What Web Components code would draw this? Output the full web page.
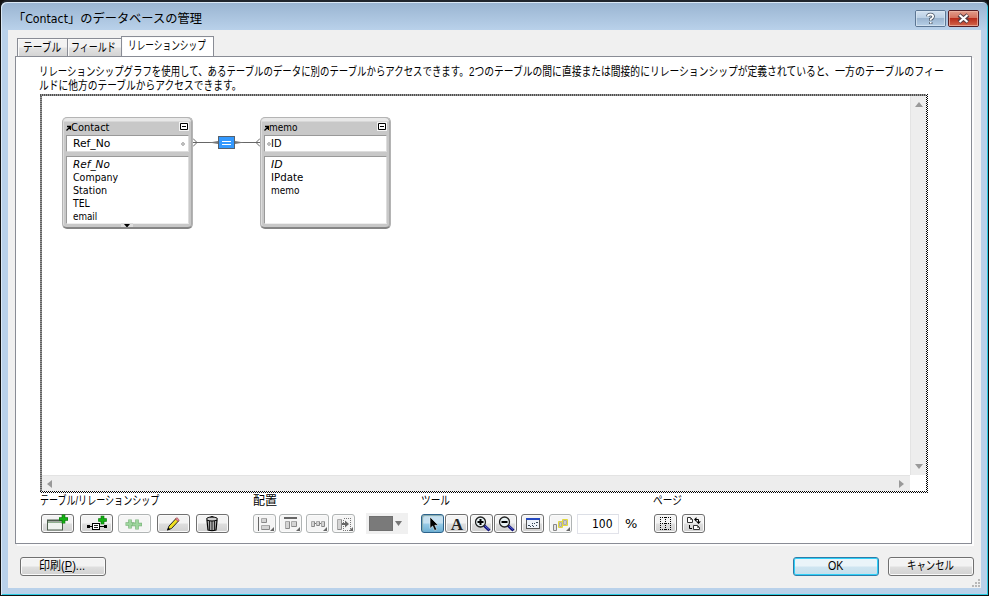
<!DOCTYPE html>
<html lang="ja">
<head>
<meta charset="utf-8">
<title>「Contact」のデータベースの管理</title>
<style>
  html,body{margin:0;height:100%;overflow:hidden;background:#111}
  body{font:12px/14px "Liberation Sans","Noto Sans CJK JP",sans-serif;color:#000}
</style>
</head>
<body>
<db-window></db-window>
<script>
const define = (name, html, setup) => customElements.define(name, class extends HTMLElement {
  constructor() {
    super();
    this.attachShadow({ mode: "open" }).innerHTML = `<style>:host,*,*::before,*::after{box-sizing:border-box}</style>${html}`;
  }
  connectedCallback() { if (setup) setup(this, this.shadowRoot); }
});

// text squeezed or stretched to a fixed advance width
define("fit-text", `
  <style>
    :host{display:block;white-space:nowrap;flex:none}
    span{display:inline-block;transform-origin:0 50%}
  </style><span><slot></slot></span>`, (el, root) => {
  const w = +el.getAttribute("w"), s = root.querySelector("span");
  el.style.width = w + "px";
  s.style.transform = `scaleX(${w / s.offsetWidth})`;
});

const plus = (x, y, r = 4.5, c = "#14b014") => `<path d="M${x - r} ${y}H${x + r}M${x} ${y - r}V${y + r}" stroke="#0a780a" stroke-width="3.6"/><path d="M${x - r + .6} ${y}H${x + r - .6}M${x} ${y - r + .6}V${y + r - .6}" stroke="${c}" stroke-width="2.2"/>`;
const box = (x, y, w, h, c = "#888") => `<path d="M${x + .5} ${y + h - .5}v${1 - h}h${w - 1}" fill="none" stroke="#aaa"/><rect x="${x + 1}" y="${y + 1}" width="${w - 2}" height="${h - 2}" fill="#d4d4d4"/><path d="M${x + .5} ${y + h - .5}h${w - 1}v${1 - h}" fill="none" stroke="${c}"/>`;
const more = `<path d="M21 13v4h-4z" fill="#666"/>`;
const lens = `<path d="M14 11.5l5.500 5" stroke="#101078" stroke-width="3"/><path d="M14.500 11.500l4.500 4" stroke="#5a6ae0" stroke-width="1"/><circle cx="10.500" cy="8" r="5" fill="#e8f2f4" stroke="#222" stroke-width="1.300"/>`;

const ICONS = {
  "new-table": `<rect x="6.500" y="6.500" width="15" height="9.500" fill="#eef4ee" stroke="#4c5c4c"/><path d="M6 6.500h16" stroke="#4c5c4c" stroke-width="2"/><path d="M7 8.500h14" stroke="#8fb08f"/>${plus(22.5, 5)}`,
  "new-rel": `<path d="M7 12.500h20" stroke="#000"/><path d="M7 11h3v3H7zM24 11h3v3h-3z"/><rect x="12.500" y="9.500" width="7" height="6" fill="#fff" stroke="#000"/><path d="M14 11.500h4M14 13.500h4" stroke="#222"/>${plus(22.5, 6, 4.3)}`,
  "dup": `<g opacity=".5">${plus(12, 10, 4.5, "#48b848")}${plus(19, 10.5, 5, "#48b848")}</g>`,
  "pencil": `<path d="M10.500 16l1.500-4 7-7.500 2.500 2.500-7 7.500z" fill="#f0e020" stroke="#222"/><path d="M10 16.500l1.400-3 1.800 1.800z"/><path d="M18.500 5l1.300-1.400 2.500 2.400-1.300 1.500z" fill="#e890a0" stroke="#933" stroke-width=".6"/>`,
  "trash": `<path d="M11 6.500l1 9.500q4 1.300 8 0l1-9.500z" fill="#aaa" stroke="#000" stroke-width="1.200"/><path d="M13.500 7v9M16 7v9.500M18.500 7v9" stroke="#222"/><ellipse cx="16" cy="5" rx="5.500" ry="2" fill="#ccc" stroke="#000"/><path d="M14.500 3q1.500-1 3 0" fill="none" stroke="#000"/>`,
  "align": `<path d="M5.500 3v14" stroke="#666"/>${box(8, 4, 6, 5)}${box(8, 11, 9, 5)}${more}`,
  "align-top": `<path d="M5 4h13" stroke="#666" stroke-width="2"/>${box(6, 7, 5, 8)}${box(12, 7, 6, 6)}${more}`,
  "spread": `<path d="M6 9.500h12" stroke="#777"/>${box(5, 7, 4, 6)}${box(10, 7, 4, 5)}${box(15, 7, 4, 6)}${more}`,
  "resize": `${box(5, 5, 5, 11)}<path d="M11.500 4.500h7v12h-7z" fill="none" stroke="#777" stroke-dasharray="1 1" shape-rendering="crispEdges"/><path d="M10 9h3V6.500l4 3.500-4 3.500V11h-3z" fill="#666"/>${more}`,
  "pointer": `<path d="M9 3v11.500l2.600-2.500 2 4.500 2.200-1-2-4.200h3.500z" fill="#000" stroke="#eef6fa" stroke-width=".6"/>`,
  "zoom-in": `${lens}<path d="M7.500 8h6M10.500 5v6" stroke="#000" stroke-width="2"/>`,
  "zoom-out": `${lens}<path d="M7.500 8h6" stroke="#000" stroke-width="2"/>`,
  "fit": `<rect x="5.500" y="4.500" width="13" height="10" fill="#eef3fa" stroke="#555"/><path d="M5 5h14" stroke="#2448c0" stroke-width="2"/><path d="M7 11h2v1H7zM8 13h1v-1h1v1zM11 11h1v1h-1zM13 9h1v1h-1zM15 8h2v1h-2zM11 9h1v1h-1zM15 11h1v1h-1zM12 12h1v1h-1z" fill="#345"/>`,
  "select-rel": `<g fill="#e4e4e4"><path d="M4.500 10.500h3v6h-3z" stroke="#888"/><path d="M9.500 7.500h4v6h-4zM13.500 5.500h5v6h-5z" stroke="#e2d83c"/><path d="M10.500 8.500h2v4h-2zM14.500 6.500h3v4h-3z" stroke="#aaa" fill="#ccc"/></g>${more}`,
  "page-breaks": `<path d="M6.500 3v13M16.500 3v13M11.500 3v13M6 3.500h11M6 9.500h11M6 15.500h11" fill="none" stroke="#000" stroke-dasharray="1 1" shape-rendering="crispEdges"/>`,
  "page-setup": `<g fill="#fff" stroke="#333"><path d="M5.500 3.500h3l2 2v3h-5zM11.500 11.500h4l2 2v2h-6z"/><path d="M8.500 3.500v2h2M15.500 11.500v2h2" fill="none" stroke-width=".7"/></g><path d="M7.500 11v3.500H10M13 5.500h3.500V9" fill="none" stroke="#000"/><path d="M14.500 3v5L12 5.500zM14 7.500h5l-2.500 2.500z"/>`
};

// toolbar button: wide, plain, disabled or selected
define("tool-button", `
  <style>
    :host{display:block;flex:none;width:23px;height:19px;border:1px solid #707070;border-radius:3px;background:linear-gradient(#f3f3f3 0 48%,#dedede 52%,#d0d0d0);box-shadow:inset 0 0 0 1px #fafafa}
    :host([wide]){width:33px}
    :host([off]){border-color:#b0b4b4;background:#f5f5f5}
    :host([on]){border-color:#2c628b;background:linear-gradient(#c5e0f0 0 48%,#98cbe7 52%,#6caed2);box-shadow:inset 1px 1px 1px #8aa}
    svg{display:block;margin:-1px;overflow:visible}
    b{display:block;margin:-1px;font:bold 17px/21px "Liberation Serif",serif;text-align:center;color:#222}
  </style><div></div>`, (el, root) => {
  const name = el.getAttribute("icon");
  root.querySelector("div").innerHTML = name === "text" ? "<b>A</b>"
    : `<svg width="${el.hasAttribute("wide") ? 33 : 23}" height="19">${ICONS[name]}</svg>`;
});

define("push-button", `
  <style>
    :host{display:flex;justify-content:center;align-items:center;width:86px;height:19px;border:1px solid #707070;border-radius:3px;background:linear-gradient(#f3f3f3 0 48%,#dfdfdf 52%,#d1d1d1);box-shadow:inset 0 0 0 1px #fafafa;padding:0 2px 1px 0}
    :host([default]){border-color:#2f7ca8;background:linear-gradient(#eaf4f9 0 48%,#cfe5f1 52%,#c4dfec);box-shadow:inset 0 0 0 1px #2fd0f8}
  </style><slot></slot>`);

define("tab-item", `
  <style>
    :host{display:flex;justify-content:center;align-items:center;height:18px;border:1px solid #898c95;border-bottom:0;border-right:0;background:linear-gradient(#f2f2f2 0 48%,#e2e2e2 52%,#d4d4d4);box-shadow:inset 1px 1px #fafafa;padding-right:2px}
    :host([active]){height:21px;margin-bottom:-1px;border-right:1px solid #898c95;background:#fff;padding-bottom:2px}
  </style><slot></slot>`);

define("tool-group", `
  <style>
    :host{display:block;flex:none}
    header{height:16px;padding-top:1px;margin-bottom:4px}
    div{display:flex;height:21px;align-items:center}
  </style><header><slot name="label"></slot></header><div><slot></slot></div>`);

define("scroll-bar", `
  <style>
    :host{display:flex;justify-content:space-between;align-items:center;background:#ededed;padding:0 6px 0 5px;border-top:1px solid #e3e3e3}
    :host([vertical]){flex-direction:column;padding:6px 0;border-top:0;border-left:1px solid #e3e3e3}
    svg{display:block}
    svg.v,:host([vertical]) svg.h{display:none}
    :host([vertical]) svg.v{display:block}
  </style>
  <svg class="h" width="5" height="8"><path d="M5 0v8L0 4z" fill="#999"/></svg>
  <svg class="v" width="8" height="5"><path d="M0 5h8L4 0z" fill="#999"/></svg>
  <svg class="h" width="5" height="8"><path d="M0 0v8l5-4z" fill="#999"/></svg>
  <svg class="v" width="8" height="5"><path d="M0 0h8L4 5z" fill="#999"/></svg>`);

// table occurrence in the relationship graph
define("table-node", `
  <style>
    :host{display:flex;flex-direction:column;width:131px;height:112px;border:1px solid #b4b4b4;border-bottom:2px solid #858585;border-radius:5px;background:linear-gradient(#e8e8e8 0 3px,#c8c8c8 4px);box-shadow:inset 1px 0 #ddd,inset -1px 0 #aaa;padding:0 3px 3px;font:11px/13px "DejaVu Sans Condensed","DejaVu Sans",sans-serif}
    header{display:flex;align-items:center;height:17px;padding-top:2px}
    header svg:last-child{margin:-2px -1px 0 auto}
    .key{display:flex;align-items:center;height:17px;background:#fff;border:1px solid #999;border-right-color:#ddd;border-bottom-color:#ddd;padding:0 3px 0 6px}
    .key svg{margin-left:auto}
    :host([left]) .key{padding-left:2px}
    :host([left]) .key svg{order:-1;margin:0}
    .list{flex:1;margin-top:4px;background:#fff;border:1px solid #999;border-right-color:#ddd;border-bottom-color:#eee;padding:1px 0 0 6px}
    .more{height:0;margin:0 auto;width:13px;overflow:visible}
    .more svg{display:block;margin-top:-1px}
  </style>
  <header><svg width="5" height="8"><path d="M.500 6.500L4 3M1 2.500h3.500V6" stroke="#000" fill="none" stroke-width="1.300"/></svg><slot name="title"></slot><svg width="11" height="10"><path fill="#f4f4f4" d="M0 0h10v9H0z"/><path d="M1.500 1.500h7v6h-7zM3 4.500h4" fill="#fff" stroke="#000"/></svg></header>
  <div class="key"><slot name="key"></slot><svg width="4" height="4"><circle cx="2" cy="2" r="1.300" fill="none" stroke="#777" stroke-width=".8"/></svg></div>
  <div class="list"><slot></slot></div>
  <div class="more"></div>`, (el, root) => {
  if (el.hasAttribute("more")) root.querySelector(".more").innerHTML = `<svg width="12" height="4"><path fill="#ddd" d="M0 0h12v4H0z"/><path d="M3 1h6L6.500 4h-1z"/></svg>`;
});

define("relation-graph", `
  <style>
    :host{display:grid;grid-template:379px 16px / 868px 16px;width:888px;height:399px;padding:2px;
      background:
        repeating-linear-gradient(90deg,#505050 0 1px,#999 1px 2px) 0 0/886px 2px no-repeat,
        repeating-linear-gradient(#606060 0 1px,#999 1px 2px) 0 0/2px 397px no-repeat,
        repeating-conic-gradient(#000 0 25%,#fff 0 50%) 0 0/2px 2px}
    .canvas{position:relative;grid-area:1/1;background:#fff}
    .corner{background:#fff}
    .canvas>*{position:absolute}
    .contact{left:20px}
    .memo{left:218px}
    .contact,.memo{top:21px}
    .link{left:151px;top:38px}
    em{display:block}
  </style>
  <div class="canvas">
    <table-node class="contact" more>
      <fit-text slot="title" w="39">Contact</fit-text><fit-text slot="key" w="37">Ref_No</fit-text>
      <em><fit-text w="37">Ref_No</fit-text></em><fit-text w="45">Company</fit-text><fit-text w="34">Station</fit-text><fit-text w="17">TEL</fit-text><fit-text w="24">email</fit-text>
    </table-node>
    <table-node class="memo" left>
      <fit-text slot="title" w="28">memo</fit-text><fit-text slot="key" w="11">ID</fit-text>
      <em><fit-text w="12">ID</fit-text></em><fit-text w="32">IPdate</fit-text><fit-text w="28">memo</fit-text>
    </table-node>
    <svg class="link" width="67" height="18">
      <path d="M0 8.500h67M0 4.500l4 4-4 4M67 4.500l-4 4 4 4" fill="none" stroke="#666"/>
      <path d="M16 8.500l9-1.500v3zM51 8.500l-9-1.500v3z" fill="#777"/>
      <rect x="25.500" y="2.500" width="16" height="12" fill="#39f" stroke="#55616d"/>
      <path d="M29 7.500h9M29 10.500h9" stroke="#fff"/>
    </svg>
  </div>
  <scroll-bar vertical></scroll-bar>
  <scroll-bar></scroll-bar>
  <div class="corner"></div>`);

define("color-well", `
  <style>
    :host{display:flex;flex:none;width:42px;height:21px;padding:3px;gap:2px;background:#f0f0f0;align-items:center}
    i{width:24px;height:15px;background:#7a7a7a;border:1px solid #707070}
  </style><i></i><svg width="7" height="5"><path d="M0 0h7L3.500 5z" fill="#777"/></svg>`);

define("zoom-field", `
  <style>
    :host{display:flex;flex:none;align-items:center;gap:6px;font:12px/14px "DejaVu Sans Condensed","DejaVu Sans",sans-serif}
    div{display:flex;justify-content:flex-end;align-items:center;width:42px;height:20px;border:1px solid #e2e3ea;border-top-color:#dcdfe6;padding-right:5px;background:#fff}
  </style><div><fit-text w="21">100</fit-text></div><fit-text w="12">%</fit-text>`);

define("db-window", `
  <style>
    :host{display:flex;flex-direction:column;width:989px;height:596px;border:1px solid #111;border-top:2px solid #20252c;border-radius:7px 7px 0 0;padding:0 7px 7px;
      background:linear-gradient(#99b4d1,#b9d1ea 28px,#b9d1ea);box-shadow:inset 1px 1px #dbe9f6,inset -1px -1px #2bcbe2}
    .title{display:flex;align-items:center;height:28px;flex:none;padding:4px 2px 0 11px;font:12.500px/17px "DejaVu Sans Condensed","Noto Sans CJK JP",sans-serif}
    .bracket{font-feature-settings:"halt"}
    .caption{display:flex;gap:2px;margin-left:auto}
    .caption svg{display:block}
    .client{display:flex;flex-direction:column;flex:1;background:#f0f0f0;padding:6px 8px 0 7px}
    nav{display:flex;align-items:flex-end;height:20px;flex:none;padding-left:2px}
    .t1{width:50px}.t2{width:54px}.t3{width:93px}
    main{flex:none;height:488px;width:957px;background:#fff;border:1px solid #898c95;box-shadow:2px 2px #fcfcfc;padding:8px 0 0 24px}
    .note{display:flex;flex-wrap:wrap;align-content:flex-start;width:910px;margin-left:-1px;height:29px}
    .tools{display:flex}
    .g1{width:213px}.g2{width:168px}.g3{width:232px}
    .g1 tool-button{margin-right:5.700px}.g1 tool-button:first-of-type{margin-left:1px}
    .g2 tool-button{margin-right:3.300px}.g2 color-well{margin-left:8px}
    .g3 tool-button{margin-right:1.300px}.g3 .gap{margin-right:4.500px}.g3 .last{margin-right:5px}
    .g4 tool-button{margin:0 4px 0 1px}
    footer{display:flex;margin:13px -1px 0 5px;gap:9px}
    footer .print{margin-right:auto}
    .grip{align-self:flex-end;margin:3px -7px 0 0;display:block}
  </style>
  <div class="title"><fit-text w="183"><span class="bracket">「</span>Contact」のデータベースの管理</fit-text>
    <div class="caption">
      <svg width="31" height="17"><defs><linearGradient id="b" x2="0" y2="1"><stop stop-color="#d5e3f1"/><stop offset=".48" stop-color="#bacfe5"/><stop offset=".5" stop-color="#9bb5d0"/><stop offset="1" stop-color="#b8d0e8"/></linearGradient></defs><rect x=".5" y=".5" width="30" height="16" rx="1.500" fill="url(#b)" stroke="#5c7694"/><rect x="1.500" y="1.500" width="28" height="14" fill="none" stroke="#dce8f4" opacity=".7"/><g fill="none"><path d="M12.800 6.500Q13 4.500 15.500 4.500t2.700 2q0 1.400-2.500 2.800v1.500M15.700 12v2" stroke="#4a5868" stroke-width="3.400"/><path d="M12.800 6.500Q13 4.500 15.500 4.500t2.700 2q0 1.400-2.500 2.800v1.200M15.700 12v1.600" stroke="#fff" stroke-width="1.800"/></g></svg>
      <svg width="31" height="17"><defs><linearGradient id="r" x2="0" y2="1"><stop stop-color="#e3a08f"/><stop offset=".48" stop-color="#d5705c"/><stop offset=".5" stop-color="#b82c1b"/><stop offset="1" stop-color="#d46a50"/></linearGradient></defs><rect x=".5" y=".5" width="30" height="16" rx="1.500" fill="url(#r)" stroke="#541d25"/><rect x="1.500" y="1.500" width="28" height="14" fill="none" stroke="#efb8a8" opacity=".7"/><path d="M11 5l9 7M20 5l-9 7" stroke="#553d44" stroke-width="4.400"/><path d="M11.500 5l8 7M19.500 5l-8 7" stroke="#fff" stroke-width="2.200"/></svg>
    </div>
  </div>
  <div class="client">
    <nav>
      <tab-item class="t1"><fit-text w="38">テーブル</fit-text></tab-item>
      <tab-item class="t2"><fit-text w="45">フィールド</fit-text></tab-item>
      <tab-item class="t3" active><fit-text w="78">リレーションシップ</fit-text></tab-item>
    </nav>
    <main>
      <div class="note">
        <fit-text w="430">リレーションシップグラフを使用して、あるテーブルのデータに別のテーブルからアクセスできます。</fit-text>
        <fit-text w="366">2つのテーブルの間に直接または間接的にリレーションシップが定義されていると、</fit-text>
        <fit-text w="109">一方のテーブルのフィー</fit-text>
        <fit-text w="202">ルドに他方のテーブルからアクセスできます。</fit-text>
      </div>
      <relation-graph></relation-graph>
      <div class="tools">
        <tool-group class="g1"><fit-text slot="label" w="119">テーブル/リレーションシップ</fit-text>
          <tool-button wide icon="new-table"></tool-button><tool-button wide icon="new-rel"></tool-button><tool-button wide off icon="dup"></tool-button><tool-button wide icon="pencil"></tool-button><tool-button wide icon="trash"></tool-button>
        </tool-group>
        <tool-group class="g2"><fit-text slot="label" w="24">配置</fit-text>
          <tool-button off icon="align"></tool-button><tool-button off icon="align-top"></tool-button><tool-button off icon="spread"></tool-button><tool-button off icon="resize"></tool-button><color-well></color-well>
        </tool-group>
        <tool-group class="g3"><fit-text slot="label" w="29">ツール</fit-text>
          <tool-button on icon="pointer"></tool-button><tool-button icon="text"></tool-button><tool-button icon="zoom-in"></tool-button><tool-button class="gap" icon="zoom-out"></tool-button><tool-button class="gap" icon="fit"></tool-button><tool-button class="last" off icon="select-rel"></tool-button><zoom-field></zoom-field>
        </tool-group>
        <tool-group class="g4"><fit-text slot="label" w="29">ページ</fit-text>
          <tool-button icon="page-breaks"></tool-button><tool-button icon="page-setup"></tool-button>
        </tool-group>
      </div>
    </main>
    <footer>
      <push-button class="print"><fit-text w="46">印刷(<u>P</u>)...</fit-text></push-button>
      <push-button default><fit-text w="15">OK</fit-text></push-button>
      <push-button><fit-text w="47">キャンセル</fit-text></push-button>
    </footer>
    <svg class="grip" width="8" height="8" fill="#b8b8b8"><path d="M6 0h2v2H6zM3 3h2v2H3zM6 3h2v2H6zM0 6h2v2H0zM3 6h2v2H3zM6 6h2v2H6z"/></svg>
  </div>`);
</script>
</body>
</html>
